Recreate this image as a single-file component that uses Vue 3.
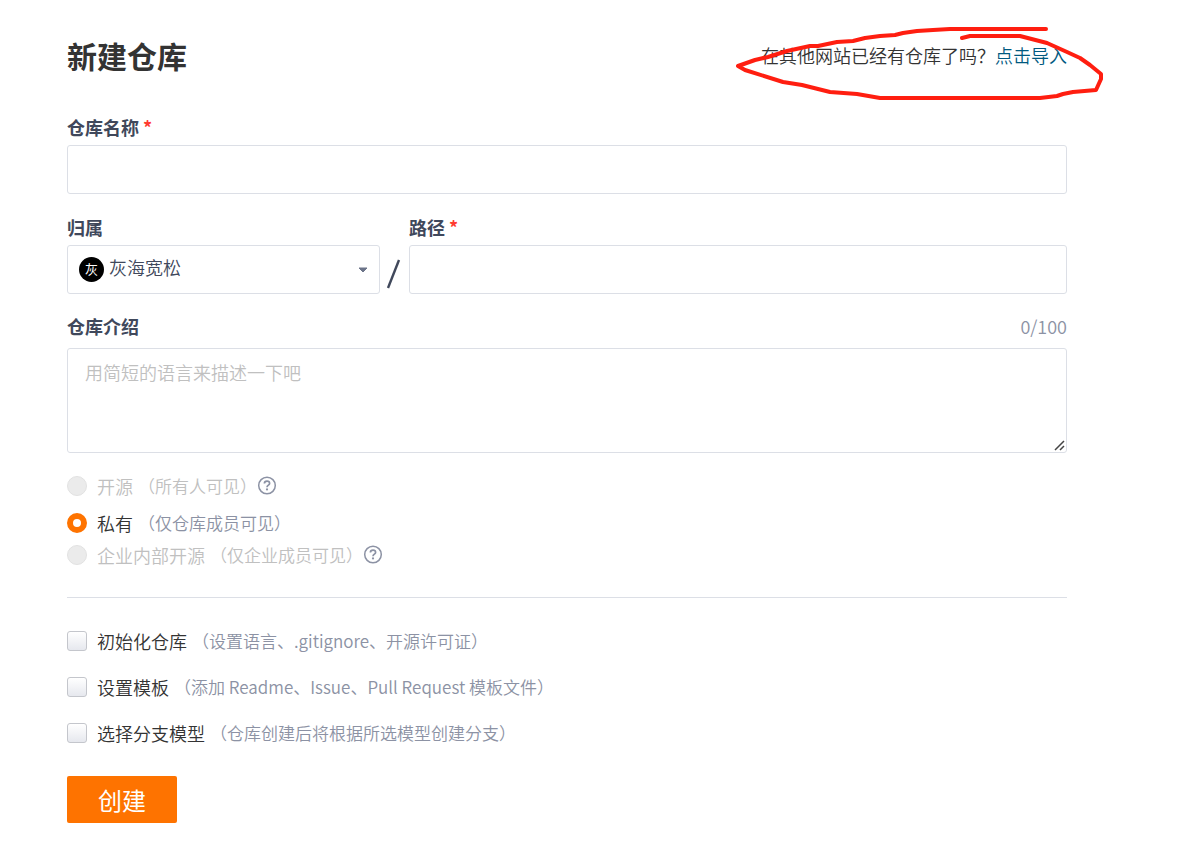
<template>
  <form class="page" @submit.prevent>
    <!-- Header -->
    <header class="header">
      <h1 class="title">新建仓库</h1>
      <div class="import">
        在其他网站已经有仓库了吗？<a href="#" class="import-link">点击导入</a>
        <svg class="mark" width="370" height="75" viewBox="0 0 370 75" fill="none" stroke="#ff1e10" stroke-width="4" stroke-linecap="round" stroke-linejoin="round" aria-hidden="true">
          <path d="M311 3H215L198 4L182 5L168 7L160 9L145 10L130 12L118 15L102 16L83 20L75 20L52 25L33 31L20 34L3 40L10 44L48 56L67 59L95 66L122 68L145 72H305L322 70L328 68L338 66L361 64L366 53V48L355 39L345 32L332 26L312 17L285 10H235L227 12" />
        </svg>
      </div>
    </header>

    <!-- Name -->
    <div class="field">
      <label class="label" for="name">仓库名称 <span class="required">*</span></label>
      <input id="name" v-model="name" class="input" type="text" />
    </div>

    <!-- Owner / path -->
    <div class="path-row">
      <div class="field owner">
        <label class="label" for="owner">归属</label>
        <div class="select-box">
          <span class="avatar">灰</span>
          <select id="owner" v-model="owner" class="select">
            <option>灰海宽松</option>
          </select>
          <svg class="caret" width="10" height="6" viewBox="0 0 10 6" aria-hidden="true">
            <path d="M1 1H9L5 5Z" fill="#6c7489" stroke="#6c7489" stroke-linejoin="round" />
          </svg>
        </div>
      </div>
      <svg class="slash" width="15" height="30" viewBox="0 0 15 30" aria-hidden="true">
        <path d="M2 29L13 1" stroke="#40485b" stroke-width="2.4" />
      </svg>
      <div class="field path">
        <label class="label" for="path">路径 <span class="required">*</span></label>
        <input id="path" v-model="path" class="input" type="text" />
      </div>
    </div>

    <!-- Description -->
    <div class="field desc">
      <div class="label-row">
        <label class="label" for="desc">仓库介绍</label>
        <span class="counter">{{ desc.length }}/100</span>
      </div>
      <textarea id="desc" v-model="desc" class="textarea" maxlength="100" placeholder="用简短的语言来描述一下吧"></textarea>
    </div>

    <!-- Visibility -->
    <div class="visibility">
      <div v-for="item in scopes" :key="item.value" class="option" :class="{ disabled: item.disabled }">
        <label class="option-label">
          <input v-model="scope" class="radio" type="radio" name="scope" :value="item.value" :disabled="item.disabled" />
          <span>{{ item.label }}</span>
          <span class="note">{{ item.note }}</span>
        </label>
        <svg v-if="item.disabled" class="help" width="20" height="20" viewBox="0 0 20 20" fill="none" stroke="#8c92a4" stroke-width="1.5">
          <circle cx="10" cy="9.5" r="8.3" />
          <path d="M7.4 7.6C7.4 6.1 8.5 5.2 10 5.2S12.6 6.1 12.6 7.4C12.6 9.1 10 9.2 10 11.2" stroke-width="1.7" />
          <circle cx="10" cy="13.4" r="1.1" fill="#8c92a4" stroke="none" />
        </svg>
      </div>
    </div>

    <!-- Extra settings -->
    <div class="extras">
      <label v-for="item in extras" :key="item.label" class="option-label extra">
        <input v-model="item.checked" class="checkbox" type="checkbox" />
        <span>{{ item.label }}</span>
        <span class="note">{{ item.note }}</span>
      </label>
    </div>

    <button class="submit" type="submit">创建</button>
  </form>
</template>

<script setup>
import { ref } from 'vue'

const name  = ref('')
const owner = ref('灰海宽松')
const path  = ref('')
const desc  = ref('')
const scope = ref('private')

const scopes = [
  { value: 'public', label: '开源', note: '（所有人可见）', disabled: true },
  { value: 'private', label: '私有', note: '（仅仓库成员可见）', disabled: false },
  { value: 'inner', label: '企业内部开源', note: '（仅企业成员可见）', disabled: true },
]

const extras = ref([
  { label: '初始化仓库', note: '（设置语言、.gitignore、开源许可证）', checked: false },
  { label: '设置模板', note: '（添加 Readme、Issue、Pull Request 模板文件）', checked: false },
  { label: '选择分支模型', note: '（仓库创建后将根据所选模型创建分支）', checked: false },
])
</script>

<style>
body {
  background: #fff;
}
</style>

<style scoped>
.page,
.page input,
.page select,
.page textarea,
.page button {
  font-family: 'Noto Sans CJK SC', sans-serif;
  font-size: 18px;
  font-weight: 350;
}

.page {
  box-sizing: border-box;
  padding: 34px 125px 20px 67px;
  line-height: 24px;
  color: #333;
}

.header {
  display: flex;
  align-items: center;
  justify-content: space-between;
  margin-bottom: 39px;
}

.title {
  margin: 0;
  font-size: 30px;
  line-height: 42px;
  font-weight: 700;
}

.import {
  position: relative;
}

.import-link {
  color: #005980;
  text-decoration: none;
}

.mark {
  position: absolute;
  top: -17px;
  right: -38px;
  pointer-events: none;
}

.field {
  display: flex;
  flex-direction: column;
  gap: 6px;
}

.label {
  font-weight: 700;
  color: #40485b;
}

.required {
  color: #ff3b30;
}

.input,
.select-box,
.textarea {
  box-sizing: border-box;
  width: 100%;
  border: 1px solid #dcdfe6;
  border-radius: 3px;
  background: #fff;
  color: #40485b;
  outline: none;
}

.input {
  height: 49px;
  padding: 0 16px;
}

.input:focus,
.textarea:focus {
  border-color: #8c92a4;
}

.path-row {
  display: flex;
  align-items: flex-end;
  margin-top: 21px;
}

.owner {
  flex: 313;
}

.path {
  flex: 658;
}

.select-box {
  display: flex;
  align-items: center;
  gap: 5px;
  height: 49px;
  padding: 0 11px;
}

.avatar {
  width: 25px;
  height: 25px;
  flex-shrink: 0;
  border-radius: 50%;
  background: #000;
  color: #fff;
  font-size: 13px;
  font-weight: 400;
  line-height: 24px;
  text-align: center;
}

.select {
  box-sizing: border-box;
  flex: 1;
  min-width: 0;
  height: 47px;
  padding: 0 0 5px;
  border: none;
  background: transparent;
  color: #40485b;
  appearance: none;
  outline: none;
}

.caret {
  flex-shrink: 0;
}

.slash {
  flex-shrink: 0;
  margin: 0 8px 5px 6px;
}

.desc {
  gap: 10px;
  margin-top: 20px;
}

.label-row {
  display: flex;
  justify-content: space-between;
}

.counter {
  color: #8c92a4;
}

.textarea {
  display: block;
  height: 105px;
  padding: 10px 17px;
  line-height: 26px;
  resize: vertical;
}

.textarea::placeholder {
  color: #c0c0c0;
}

.textarea::-webkit-resizer {
  background: url("data:image/svg+xml,%3Csvg xmlns='http://www.w3.org/2000/svg' width='15' height='15'%3E%3Cpath d='M4 13L13 4M9 13L13 9' stroke='%23444' stroke-width='1.5'/%3E%3C/svg%3E") no-repeat right bottom;
}

.visibility {
  padding: 17px 0 26px;
  border-bottom: 1px solid #dcdfe6;
}

.option {
  display: flex;
  align-items: center;
  height: 32px;
}

.option:first-child {
  margin-bottom: 5px;
}

.option-label {
  display: flex;
  align-items: center;
}

.note {
  margin-left: 5px;
  color: #8c92a4;
  font-size: 17px;
}

.disabled,
.disabled .note {
  color: #c0c0c0;
}

.radio,
.checkbox {
  box-sizing: border-box;
  width: 20px;
  height: 20px;
  margin: 0 10px 0 0;
  flex-shrink: 0;
  appearance: none;
}

.radio {
  border: 1px solid #d4d4d5;
  border-radius: 50%;
  background: #fff;
}

.radio:disabled {
  border-color: #e2e2e2;
  background: #ebebeb;
}

.radio:checked {
  border: 6px solid #fe7300;
}

.checkbox {
  border: 1px solid #c4c6cc;
  border-radius: 3px;
  background: linear-gradient(#fff, #e6e8ee);
}

.checkbox:checked {
  background: #fe7300;
}

.extras {
  margin: 20px 0;
}

.extra {
  height: 46px;
}

.page .submit {
  display: block;
  min-width: 110px;
  height: 47px;
  padding: 0 30px;
  border: none;
  border-radius: 2px;
  background: #fe7300;
  color: #fff;
  font-size: 24px;
  font-weight: 400;
  line-height: 46px;
  cursor: pointer;
}
.page .submit:hover { background: #e86900; }
</style>
